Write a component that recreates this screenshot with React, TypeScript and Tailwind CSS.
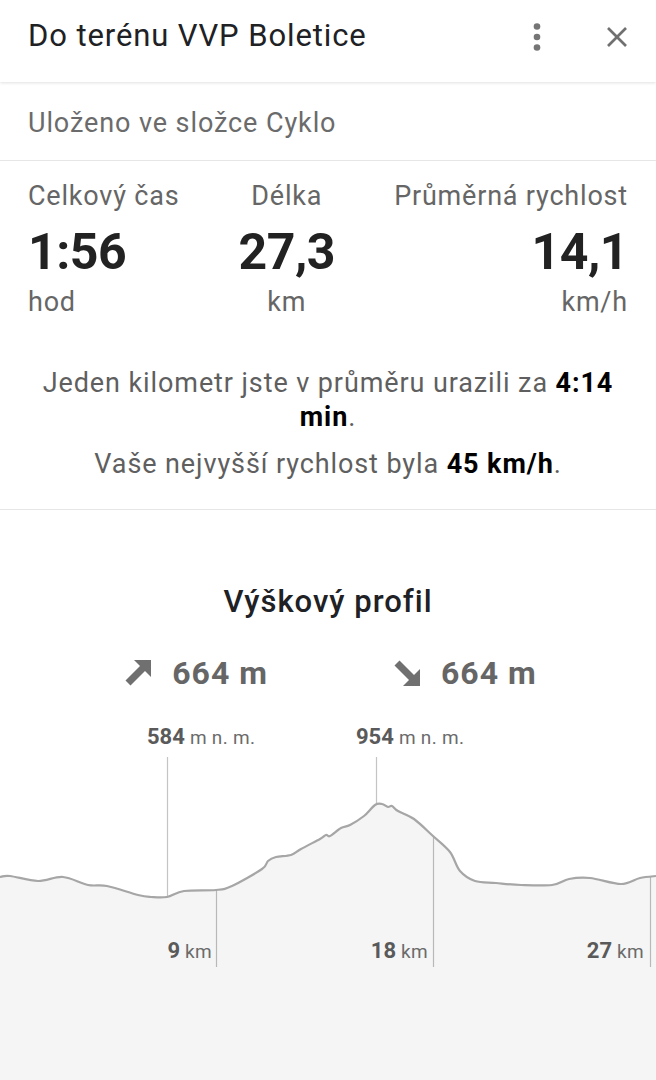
import React from 'react';

const font = { fontFamily: 'Roboto, "Noto Sans", sans-serif' };

// profile points in page coords; chart block starts at y=720
const profile: [number, number][] = [
  [0, 878], [10, 877], [38, 882], [63, 878], [88, 886], [107, 887], [138, 896], [151, 898],
  [167, 898], [184, 892], [216, 891], [232, 887], [262, 870], [268, 862], [276, 858], [291, 856], [301, 850],
  [320, 840], [326, 836], [330, 837], [341, 829], [350, 826], [364, 817], [375, 806], [382, 805], [388, 808],
  [392, 807], [398, 812], [414, 820], [433, 837], [450, 853], [460, 872], [475, 882], [496, 884], [521, 886],
  [552, 886], [569, 880], [590, 879], [621, 885], [640, 879], [656, 877],
];

// smooth the polyline a bit (catmull-rom -> bezier)
const smooth = (pts: [number, number][]) => {
  let d = `M${pts[0][0]} ${pts[0][1] - 720}`;
  for (let i = 0; i < pts.length - 1; i++) {
    const p0 = pts[i - 1] || pts[i];
    const p1 = pts[i];
    const p2 = pts[i + 1];
    const p3 = pts[i + 2] || p2;
    const c1x = p1[0] + (p2[0] - p0[0]) / 6;
    const c1y = p1[1] + (p2[1] - p0[1]) / 6;
    const c2x = p2[0] - (p3[0] - p1[0]) / 6;
    const c2y = p2[1] - (p3[1] - p1[1]) / 6;
    d += ` C${c1x.toFixed(1)} ${(c1y - 720).toFixed(1)} ${c2x.toFixed(1)} ${(c2y - 720).toFixed(1)} ${p2[0]} ${p2[1] - 720}`;
  }
  return d;
};

const linePath = smooth(profile);
const fillPath = `${linePath} L656 400 L0 400 Z`;

const Stat = ({ label, value, unit, align }: { label: string; value: string; unit: string; align: string }) => (
  <div className={`flex flex-col ${align}`}>
    <div className="text-[27px] leading-[32px] tracking-[0.8px] text-[#666]">{label}</div>
    <div className="mt-[12px] text-[50px] leading-[56px] font-bold text-[#222] tracking-[-0.5px]">{value}</div>
    <div className="mt-[6px] text-[27px] leading-[32px] tracking-[0.8px] text-[#666]">{unit}</div>
  </div>
);

const ArrowUp = () => (
  <svg width="26" height="26" viewBox="0 0 26 26" fill="#707070">
    <polygon points="26,0 26,17 9,0" />
    <line x1="3" y1="23" x2="18" y2="8" stroke="#707070" strokeWidth="7" />
  </svg>
);

const ArrowDown = () => (
  <svg width="26" height="26" viewBox="0 0 26 26" fill="#707070">
    <polygon points="26,26 26,9 9,26" />
    <line x1="3" y1="3" x2="18" y2="18" stroke="#707070" strokeWidth="7" />
  </svg>
);

const Mark = ({ num, unit }: { num: string; unit: string }) => (
  <>
    <span className="text-[22px] font-bold text-[#5a5a5a]">{num}</span>
    <span className="text-[19px] text-[#6b6b6b] tracking-[0.3px]"> {unit}</span>
  </>
);

const App = () => {
  return (
    <div className="w-[656px] h-[1080px] overflow-hidden bg-white flex flex-col" style={font}>
      {/* header */}
      <div className="h-[82px] shrink-0 flex items-start pt-[15px] pl-[28px] pr-[28px] shadow-[0_1px_3px_rgba(0,0,0,0.12)] relative">
        <div className="text-[31px] leading-[42px] tracking-[0.9px] text-[#202124] flex-1">Do terénu VVP Boletice</div>
        <div className="flex items-center gap-[65px] h-[44px]">
          <svg width="8" height="28" viewBox="0 0 8 28" fill="#757575">
            <circle cx="4" cy="3.5" r="3.3" />
            <circle cx="4" cy="14" r="3.3" />
            <circle cx="4" cy="24.5" r="3.3" />
          </svg>
          <svg width="22" height="22" viewBox="0 0 22 22" stroke="#707070" strokeWidth="2.6">
            <line x1="2" y1="2" x2="20" y2="20" />
            <line x1="20" y1="2" x2="2" y2="20" />
          </svg>
        </div>
      </div>

      <div className="h-[79px] shrink-0 flex items-center px-[28px] pt-[4px] border-b border-[#e6e6e6]">
        <span className="text-[27px] tracking-[0.9px] text-[#6b6b6b]">Uloženo ve složce Cyklo</span>
      </div>

      {/* stats */}
      <div className="shrink-0 px-[28px] pt-[19px] pb-[28px] border-b border-[#e6e6e6]">
        <div className="flex justify-between">
          <Stat label="Celkový čas" value="1:56" unit="hod" align="items-start" />
          <Stat label="Délka" value="27,3" unit="km" align="items-center" />
          <Stat label="Průměrná rychlost" value="14,1" unit="km/h" align="items-end" />
        </div>
        <p className="mt-[48px] text-center text-[27px] leading-[34px] tracking-[0.9px] text-[#5f5f5f]">
          Jeden kilometr jste v průměru urazili za <b className="text-black font-bold">4:14</b>{' '}
          <b className="text-black font-bold">min</b>.
        </p>
        <p className="mt-[13px] text-center text-[27px] leading-[34px] tracking-[0.9px] text-[#5f5f5f]">
          Vaše nejvyšší rychlost byla <b className="text-black font-bold">45 km/h</b>.
        </p>
      </div>

      {/* elevation profile */}
      <div className="pt-[74px] flex-1">
        <div className="text-center text-[31px] leading-[36px] tracking-[1px] font-medium text-[#202124]">Výškový profil</div>
        <div className="mt-[33px] flex justify-center gap-[126px] h-[40px] items-center ml-[6px]">
          <div className="flex items-center gap-[21px]">
            <ArrowUp />
            <span className="text-[32px] font-bold tracking-[1px] text-[#666]">664 m</span>
          </div>
          <div className="flex items-center gap-[21px]">
            <ArrowDown />
            <span className="text-[32px] font-bold tracking-[1px] text-[#666]">664 m</span>
          </div>
        </div>

        <div className="relative mt-[26px] h-[400px]">
          <svg className="absolute inset-0" width="656" height="400" viewBox="0 0 656 400">
            <path d={fillPath} fill="#f5f5f5" />
            <line x1="167.5" y1="38" x2="167.5" y2="178" stroke="#c4c4c4" strokeWidth="1.2" />
            <line x1="376.5" y1="38" x2="376.5" y2="86" stroke="#c4c4c4" strokeWidth="1.2" />
            <line x1="216.5" y1="171" x2="216.5" y2="248" stroke="#b8b8b8" strokeWidth="1.2" />
            <line x1="433.5" y1="117" x2="433.5" y2="248" stroke="#b8b8b8" strokeWidth="1.2" />
            <line x1="650.5" y1="157" x2="650.5" y2="248" stroke="#b8b8b8" strokeWidth="1.2" />
            <path d={linePath} fill="none" stroke="#a6a6a6" strokeWidth="2.2" strokeLinejoin="round" />
          </svg>

          <div className="absolute left-[147px] top-[5px] leading-[26px] whitespace-nowrap">
            <Mark num="584" unit="m n. m." />
          </div>
          <div className="absolute left-[356px] top-[5px] leading-[26px] whitespace-nowrap">
            <Mark num="954" unit="m n. m." />
          </div>

          <div className="absolute right-[444px] top-[219px] leading-[26px] whitespace-nowrap">
            <Mark num="9" unit="km" />
          </div>
          <div className="absolute right-[228px] top-[219px] leading-[26px] whitespace-nowrap">
            <Mark num="18" unit="km" />
          </div>
          <div className="absolute right-[12px] top-[219px] leading-[26px] whitespace-nowrap">
            <Mark num="27" unit="km" />
          </div>
        </div>
      </div>
    </div>
  );
};

export default App;
